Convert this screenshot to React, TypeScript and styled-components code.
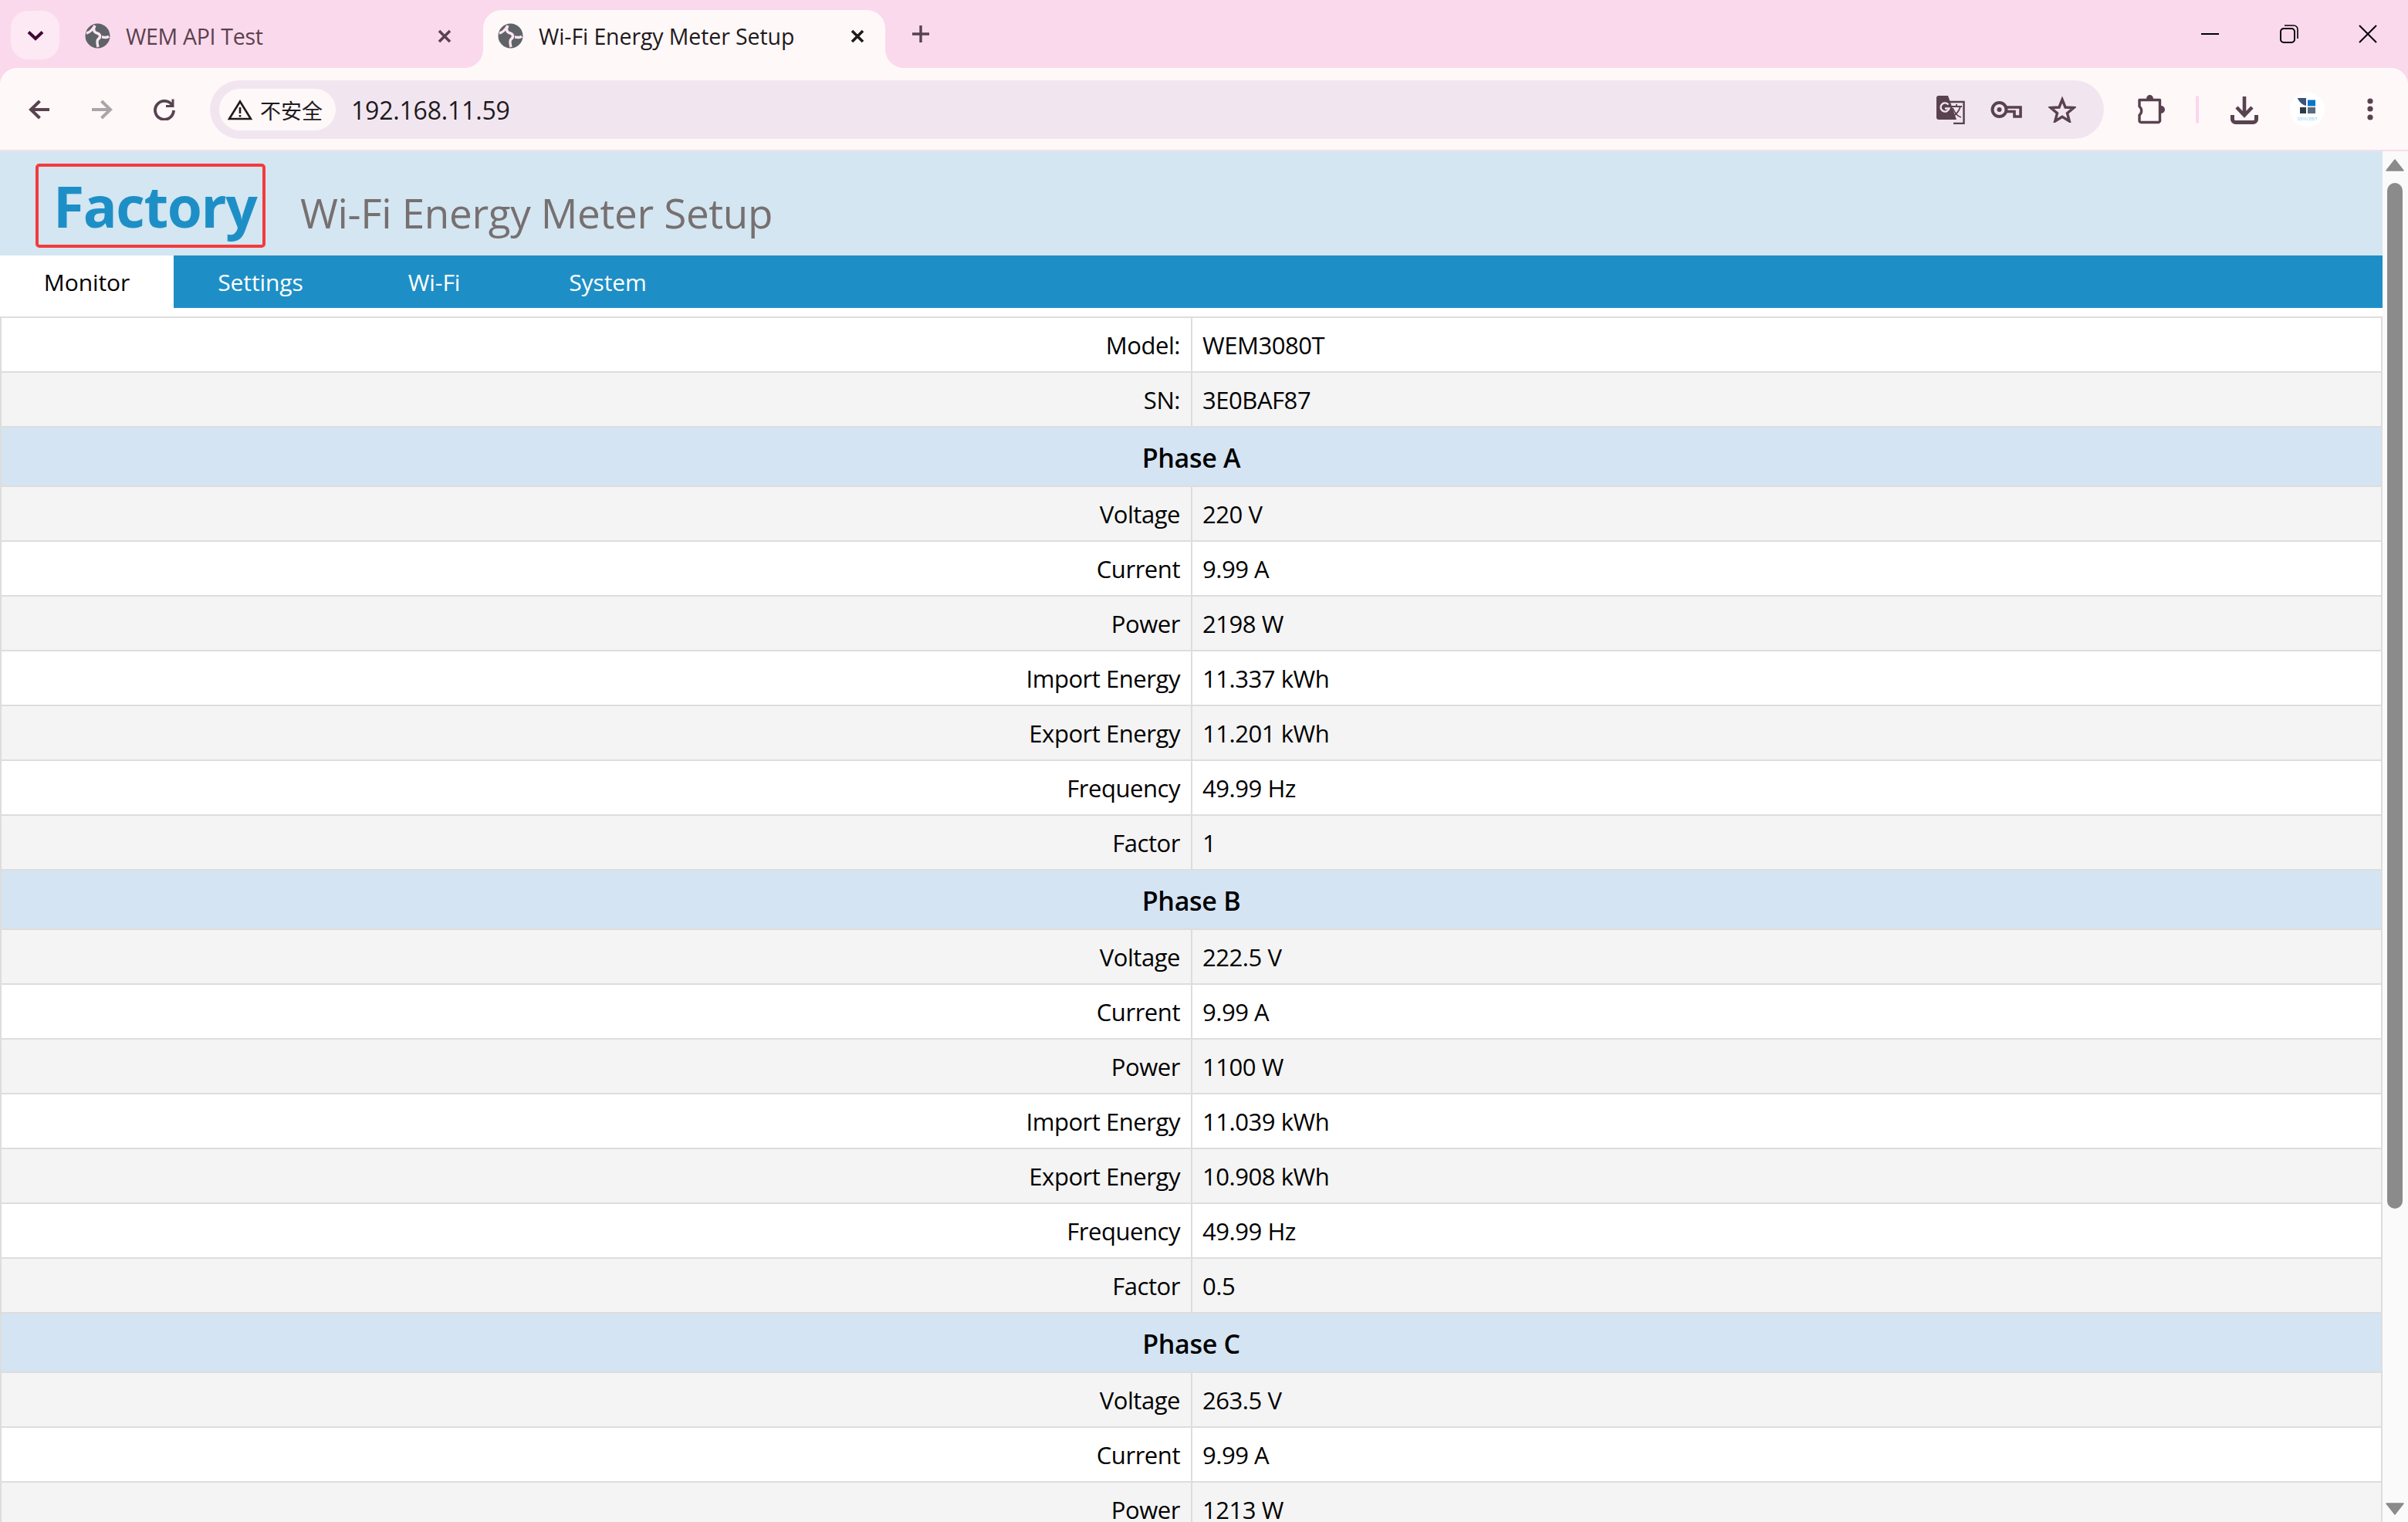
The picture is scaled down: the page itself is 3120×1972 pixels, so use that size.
import React from 'react';
import styled, { createGlobalStyle } from 'styled-components';

const GlobalStyle = createGlobalStyle`
    html, body {
        margin: 0;
        padding: 0;
        background: #ffffff;
    }
    * {
        box-sizing: border-box;
    }
`;

const FONT = `"Open Sans", "Noto Sans", sans-serif`;
const ICON = '#59424f';

const Screen = styled.div`
    display: flex;
    flex-direction: column;
    width: 3120px;
    height: 1972px;
    overflow: hidden;
    font-family: ${FONT};
    color: #000000;
`;

/* browser chrome */
const TabStrip = styled.div`
    display: flex;
    flex: 0 0 88px;
    background: #fbd9ec;
`;

const TabMenu = styled.div`
    display: flex;
    align-items: center;
    justify-content: center;
    width: 63px;
    height: 63px;
    margin: 14px 17px 0 14px;
    border-radius: 22px;
    background: #fde9f4;
`;

const Tab = styled.div<{ $active?: boolean }>`
    position: relative;
    display: flex;
    align-items: center;
    width: ${p => (p.$active ? '521px' : '532px')};
    height: 75px;
    margin-top: 13px;
    padding: 0 0 8px ${p => (p.$active ? '19px' : '16px')};
    border-radius: 24px 24px 0 0;
    background: ${p => (p.$active ? '#fff8f9' : 'transparent')};
    color: ${p => (p.$active ? '#1f1a1c' : ICON)};
    font-size: 28.5px;
    letter-spacing: -0.1px;

    ${p => p.$active && `
        &::before, &::after {
            content: '';
            position: absolute;
            bottom: 0;
            width: 24px;
            height: 24px;
        }
        &::before {
            left: -24px;
            background: radial-gradient(circle at 0 0, #fbd9ec 23.5px, #fff8f9 24.5px);
        }
        &::after {
            right: -24px;
            background: radial-gradient(circle at 100% 0, #fbd9ec 23.5px, #fff8f9 24.5px);
        }
    `}
`;

const TabTitle = styled.span<{ $active?: boolean }>`
    flex: 1;
    margin-left: ${p => (p.$active ? '20px' : '20px')};
    letter-spacing: ${p => (p.$active ? '-0.1px' : '-0.3px')};
    white-space: nowrap;
`;

const TabClose = styled.span<{ $active?: boolean }>`
    display: flex;
    margin-right: ${p => (p.$active ? '27px' : '41px')};
`;

const NewTab = styled.div`
    display: flex;
    align-items: center;
    margin: 0 0 0 34px;
    height: 88px;
`;

const WindowControls = styled.div`
    display: flex;
    align-items: center;
    gap: 78px;
    height: 88px;
    margin-left: auto;
    padding: 0 40px 0 0;
`;

const ToolbarBack = styled.div`
    flex: 0 0 108px;
    background: #fbd9ec;
`;

const Toolbar = styled.div`
    display: flex;
    align-items: center;
    height: 108px;
    padding: 2px 0 0 37px;
    border-bottom: 2px solid #f5dfe8;
    border-radius: 22px 22px 0 0;
    background: #fff8f9;
`;

const NavArrows = styled.div`
    display: flex;
    align-items: center;
    gap: 53px;
    margin-right: 45px;
`;

const Omnibox = styled.div`
    display: flex;
    align-items: center;
    width: 2454px;
    height: 76px;
    padding: 0 36px 0 12px;
    border-radius: 38px;
    background: #f1e6f0;
`;

const SecurityChip = styled.div`
    display: flex;
    align-items: center;
    gap: 10px;
    width: 151px;
    height: 54px;
    padding-left: 11px;
    border-radius: 27px;
    background: #fff8f9;
    color: #1f1a1c;
    font-family: "Noto Sans CJK SC", sans-serif;
    font-size: 27px;
`;

const Url = styled.span`
    margin-left: 20px;
    color: #1f1a1c;
    font-size: 32px;
    letter-spacing: -0.2px;
`;

const OmniIcons = styled.div`
    display: flex;
    align-items: center;
    gap: 34px;
    margin-left: auto;
`;

const ToolIcons = styled.div`
    display: flex;
    align-items: center;
    margin-left: 44px;
`;

const Separator = styled.span`
    width: 4px;
    height: 36px;
    margin: 0 41px 0 39px;
    border-radius: 2px;
    background: #fdd6ec;
`;

const ProfileButton = styled.span`
    display: flex;
    margin: 0 55px 0 41px;
`;

/* page */
const Viewport = styled.div`
    display: flex;
    flex: 1;
    min-height: 0;
`;

const Content = styled.div`
    flex: 0 0 3087px;
`;

const Header = styled.header`
    display: flex;
    height: 135px;
    padding: 16px 0 0 46px;
    background: #d3e6f1;
`;

const Brand = styled.div`
    width: 298px;
    height: 109px;
    padding-left: 19px;
    border: 4px solid #f33b3b;
    border-radius: 5px;
    color: #1e8fc6;
    font-size: 73px;
    font-weight: 700;
    line-height: 102px;
    letter-spacing: -1.4px;
`;

const PageTitle = styled.h1`
    margin: 29px 0 0 45px;
    color: #777070;
    font-size: 53px;
    font-weight: 400;
    line-height: 70px;
    letter-spacing: -0.35px;
`;

const Nav = styled.nav`
    display: flex;
    height: 68px;
    background: #1e8fc6;
`;

const NavItem = styled.a<{ $active?: boolean }>`
    display: flex;
    align-items: center;
    justify-content: center;
    width: 225px;
    background: ${p => (p.$active ? '#ffffff' : 'transparent')};
    color: ${p => (p.$active ? '#000000' : '#ffffff')};
    font-size: 30px;
    letter-spacing: -0.1px;
`;

const Table = styled.div`
    margin-top: 11px;
    border: 2px solid #dddddd;
    border-bottom: 0;
`;

const Row = styled.div<{ $shaded?: boolean }>`
    display: grid;
    grid-template-columns: 1541px 2px 1fr;
    height: 71px;
    border-bottom: 2px solid #dddddd;
    background: ${p => (p.$shaded ? '#f4f4f4' : '#ffffff')};
    font-size: 31px;
    letter-spacing: -0.45px;
    line-height: 70px;
`;

const Label = styled.div`
    padding-right: 14px;
    text-align: right;
`;

const Divider = styled.div`
    background: #dddddd;
`;

const Value = styled.div`
    padding-left: 13px;
`;

const PhaseRow = styled.div`
    height: 77px;
    border-bottom: 2px solid #dddddd;
    background: #d5e4f3;
    font-size: 34px;
    font-weight: 600;
    letter-spacing: -0.3px;
    line-height: 78px;
    text-align: center;
`;

const Scrollbar = styled.div`
    display: flex;
    flex: 1;
    flex-direction: column;
    align-items: center;
    padding: 10px 1px 9px 0;
    background: #fafafa;
`;

const ScrollThumb = styled.div`
    width: 20px;
    height: 1329px;
    margin-top: 15px;
    border-radius: 10px;
    background: #8b8b8b;
`;

const ScrollDown = styled.div`
    display: flex;
    margin-top: auto;
`;

/* icons */
const ChevronDown = () => (
    <svg width="22" height="14" viewBox="0 0 22 14">
        <path d="M2 2.5 L11 11 L20 2.5" fill="none" stroke="#3d0a33" strokeWidth="4" />
    </svg>
);

const Globe = () => (
    <svg width="33" height="33" viewBox="0 0 33 33" style={{ flex: 'none' }}>
        <circle cx="16.5" cy="16.5" r="16" fill="#5f6368" />
        <path d="M2 13 C7 12 10 8 13 3 C10 9 12 12 16 13 C20 14 21 18 17 21 C15 23 16 27 17 31" fill="none" stroke="#fbe6f1" strokeWidth="3.4" />
        <path d="M22 18 C26 18 28 20 31 17" fill="none" stroke="#fbe6f1" strokeWidth="3.4" />
    </svg>
);

const CloseGlyph = ({ color }: { color: string }) => (
    <svg width="18" height="18" viewBox="0 0 18 18">
        <path d="M2 2 L16 16 M16 2 L2 16" fill="none" stroke={color} strokeWidth="3.6" />
    </svg>
);

const PlusGlyph = () => (
    <svg width="24" height="24" viewBox="0 0 24 24">
        <path d="M12 1 V23 M1 12 H23" fill="none" stroke={ICON} strokeWidth="3.4" />
    </svg>
);

const ArrowLeft = ({ color = ICON }: { color?: string }) => (
    <svg width="28" height="28" viewBox="0 0 28 28">
        <path d="M27 14 H4 M14.5 3 L3 14 L14.5 25" fill="none" stroke={color} strokeWidth="4" />
    </svg>
);

const ArrowRight = () => (
    <svg width="28" height="28" viewBox="0 0 28 28">
        <path d="M1 14 H24 M13.5 3 L25 14 L13.5 25" fill="none" stroke="#aaa5a8" strokeWidth="4" />
    </svg>
);

const Reload = () => (
    <svg width="28" height="28" viewBox="0 0 28 28">
        <path d="M24.5 9 A12 12 0 1 0 26 15" fill="none" stroke={ICON} strokeWidth="3.8" />
        <path d="M26.5 0.5 V11 H16 V8 H23.5 V0.5 Z" fill={ICON} />
    </svg>
);

const WarningTriangle = () => (
    <svg width="32" height="27" viewBox="0 0 32 27" style={{ flex: 'none' }}>
        <path d="M16 2.5 L30 25 H2 Z" fill="none" stroke="#1f1a1c" strokeWidth="2.6" />
        <path d="M16 10 V18 M16 20 V22.6" fill="none" stroke="#1f1a1c" strokeWidth="2.6" />
    </svg>
);

const TranslateIcon = () => (
    <svg width="37" height="37" viewBox="0 0 37 37" style={{ marginRight: -1 }}>
        <path d="M16 8 H35.5 V36 H22" fill="#f1e6f0" stroke={ICON} strokeWidth="2.5" />
        <path d="M3 0 H15 L26 31 H3 A3 3 0 0 1 0 28 V3 A3 3 0 0 1 3 0 Z" fill={ICON} />
        <path d="M15.5 11.5 A5.6 5.6 0 1 0 16.5 16.5 H11" fill="none" stroke="#f1e6f0" strokeWidth="2.4" />
        <path d="M19 14 H33 M26 11 V14 M31 14 C29 21 25 25 20 27 M21 16 C24 23 28 27 32 28" fill="none" stroke={ICON} strokeWidth="1.8" />
    </svg>
);

const KeyIcon = () => (
    <svg width="41" height="24" viewBox="0 0 41 24">
        <circle cx="11.5" cy="12" r="9" fill="none" stroke={ICON} strokeWidth="4" />
        <circle cx="11.5" cy="12" r="3" fill={ICON} />
        <path d="M21 9 H39 V21 H31 V14.5 H21" fill="none" stroke={ICON} strokeWidth="3.6" />
    </svg>
);

const StarIcon = () => (
    <svg width="36" height="34" viewBox="0 0 36 34">
        <path d="M18 4 L22 14 L33 14.6 L24.5 21.6 L27.3 32 L18 26.2 L8.7 32 L11.5 21.6 L3 14.6 L14 14 Z" fill="none" stroke={ICON} strokeWidth="3.4" />
    </svg>
);

const ExtensionIcon = () => (
    <svg width="36" height="38" viewBox="0 0 36 38">
        <path d="M2 6.5 H28.5 V32 A3 3 0 0 1 27 35.5 H4 A2 2 0 0 1 2 33.5 V26 A7 7 0 0 0 2 15 Z" fill="none" stroke={ICON} strokeWidth="3.4" strokeLinejoin="round" />
        <path d="M11 5 A4.5 5 0 0 1 20 5 Z" fill={ICON} />
        <path d="M30 14 A5 5 0 0 1 30 24 Z" fill={ICON} />
    </svg>
);

const DownloadIcon = () => (
    <svg width="36" height="37" viewBox="0 0 36 37">
        <path d="M18 1 V26 M8 15 L18 25.5 L28 15" fill="none" stroke={ICON} strokeWidth="4.6" />
        <path d="M2.5 25 V30.5 A4 4 0 0 0 6.5 34.5 H29.5 A4 4 0 0 0 33.5 30.5 V25" fill="none" stroke={ICON} strokeWidth="5" />
    </svg>
);

const DotsIcon = () => (
    <svg width="8" height="30" viewBox="0 0 8 30">
        <circle cx="4" cy="4" r="3.6" fill={ICON} />
        <circle cx="4" cy="14" r="3.6" fill={ICON} />
        <circle cx="4" cy="25" r="3.6" fill={ICON} />
    </svg>
);

const ProfileIcon = () => (
    <svg width="45" height="46" viewBox="0 0 45 46">
        <circle cx="22.5" cy="23" r="22.5" fill="#ffffff" />
        <path d="M9.7 8 L21 8 L21 18 C16 17 12 13 9.7 8 Z" fill="#3d5278" />
        <rect x="23" y="10.5" width="10" height="8" fill="#0e74c8" />
        <rect x="13" y="20" width="8" height="8" fill="#2f3a44" />
        <rect x="23" y="20" width="10" height="8" fill="#5c6b7d" />
        <text x="22.5" y="37" textAnchor="middle" fontSize="5.4" fontFamily="Open Sans, sans-serif" fill="#8fd0ee">DEVICEBIT</text>
    </svg>
);

const MinimizeIcon = () => (
    <svg width="24" height="24" viewBox="0 0 24 24">
        <path d="M0 12 H23" fill="none" stroke="#000000" strokeWidth="2" />
    </svg>
);

const RestoreIcon = () => (
    <svg width="24" height="24" viewBox="0 0 24 24">
        <rect x="1" y="5" width="18" height="18" rx="4" fill="none" stroke="#000000" strokeWidth="2" />
        <path d="M6 1 H18 A5 5 0 0 1 23 6 V18" fill="none" stroke="#000000" strokeWidth="1.6" />
    </svg>
);

const CloseWindowIcon = () => (
    <svg width="24" height="24" viewBox="0 0 24 24">
        <path d="M1 1 L23 23 M23 1 L1 23" fill="none" stroke="#000000" strokeWidth="2" />
    </svg>
);

const ScrollArrow = ({ up }: { up?: boolean }) => (
    <svg width="24" height="16" viewBox="0 0 24 16">
        <path d={up ? 'M12 1 L23 15 H1 Z' : 'M1 1 H23 L12 15 Z'} fill="#8b8b8b" stroke="#8b8b8b" strokeWidth="1.5" strokeLinejoin="round" />
    </svg>
);

type Measure = [string, string];

const phaseA: Measure[] = [
    ['Voltage', '220 V'],
    ['Current', '9.99 A'],
    ['Power', '2198 W'],
    ['Import Energy', '11.337 kWh'],
    ['Export Energy', '11.201 kWh'],
    ['Frequency', '49.99 Hz'],
    ['Factor', '1'],
];

const phaseB: Measure[] = [
    ['Voltage', '222.5 V'],
    ['Current', '9.99 A'],
    ['Power', '1100 W'],
    ['Import Energy', '11.039 kWh'],
    ['Export Energy', '10.908 kWh'],
    ['Frequency', '49.99 Hz'],
    ['Factor', '0.5'],
];

const phaseC: Measure[] = [
    ['Voltage', '263.5 V'],
    ['Current', '9.99 A'],
    ['Power', '1213 W'],
];

const DataRow = ({ label, value, shaded }: { label: string; value: string; shaded?: boolean }) => (
    <Row $shaded={shaded}>
        <Label>{label}</Label>
        <Divider />
        <Value>{value}</Value>
    </Row>
);

const Phase = ({ title, rows }: { title: string; rows: Measure[] }) => (
    <>
        <PhaseRow>{title}</PhaseRow>
        {rows.map(([label, value], i) => (
            <DataRow key={label} label={label} value={value} shaded={i % 2 === 0} />
        ))}
    </>
);

export default function App() {
    return (
        <Screen>
            <GlobalStyle />
            <TabStrip>
                <TabMenu><ChevronDown /></TabMenu>
                <Tab>
                    <Globe />
                    <TabTitle>WEM API Test</TabTitle>
                    <TabClose><CloseGlyph color={ICON} /></TabClose>
                </Tab>
                <Tab $active>
                    <Globe />
                    <TabTitle $active>Wi-Fi Energy Meter Setup</TabTitle>
                    <TabClose $active><CloseGlyph color="#1f1a1c" /></TabClose>
                </Tab>
                <NewTab><PlusGlyph /></NewTab>
                <WindowControls>
                    <MinimizeIcon />
                    <RestoreIcon />
                    <CloseWindowIcon />
                </WindowControls>
            </TabStrip>
            <ToolbarBack>
                <Toolbar>
                    <NavArrows>
                        <ArrowLeft />
                        <ArrowRight />
                        <Reload />
                    </NavArrows>
                    <Omnibox>
                        <SecurityChip>
                            <WarningTriangle />
                            <span>不安全</span>
                        </SecurityChip>
                        <Url>192.168.11.59</Url>
                        <OmniIcons>
                            <TranslateIcon />
                            <KeyIcon />
                            <StarIcon />
                        </OmniIcons>
                    </Omnibox>
                    <ToolIcons>
                        <ExtensionIcon />
                        <Separator />
                        <DownloadIcon />
                        <ProfileButton><ProfileIcon /></ProfileButton>
                        <DotsIcon />
                    </ToolIcons>
                </Toolbar>
            </ToolbarBack>
            <Viewport>
                <Content>
                    <Header>
                        <Brand>Factory</Brand>
                        <PageTitle>Wi-Fi Energy Meter Setup</PageTitle>
                    </Header>
                    <Nav>
                        <NavItem $active>Monitor</NavItem>
                        <NavItem>Settings</NavItem>
                        <NavItem>Wi-Fi</NavItem>
                        <NavItem>System</NavItem>
                    </Nav>
                    <Table>
                        <DataRow label="Model:" value="WEM3080T" />
                        <DataRow label="SN:" value="3E0BAF87" shaded />
                        <Phase title="Phase A" rows={phaseA} />
                        <Phase title="Phase B" rows={phaseB} />
                        <Phase title="Phase C" rows={phaseC} />
                    </Table>
                </Content>
                <Scrollbar>
                    <ScrollArrow up />
                    <ScrollThumb />
                    <ScrollDown><ScrollArrow /></ScrollDown>
                </Scrollbar>
            </Viewport>
        </Screen>
    );
}
